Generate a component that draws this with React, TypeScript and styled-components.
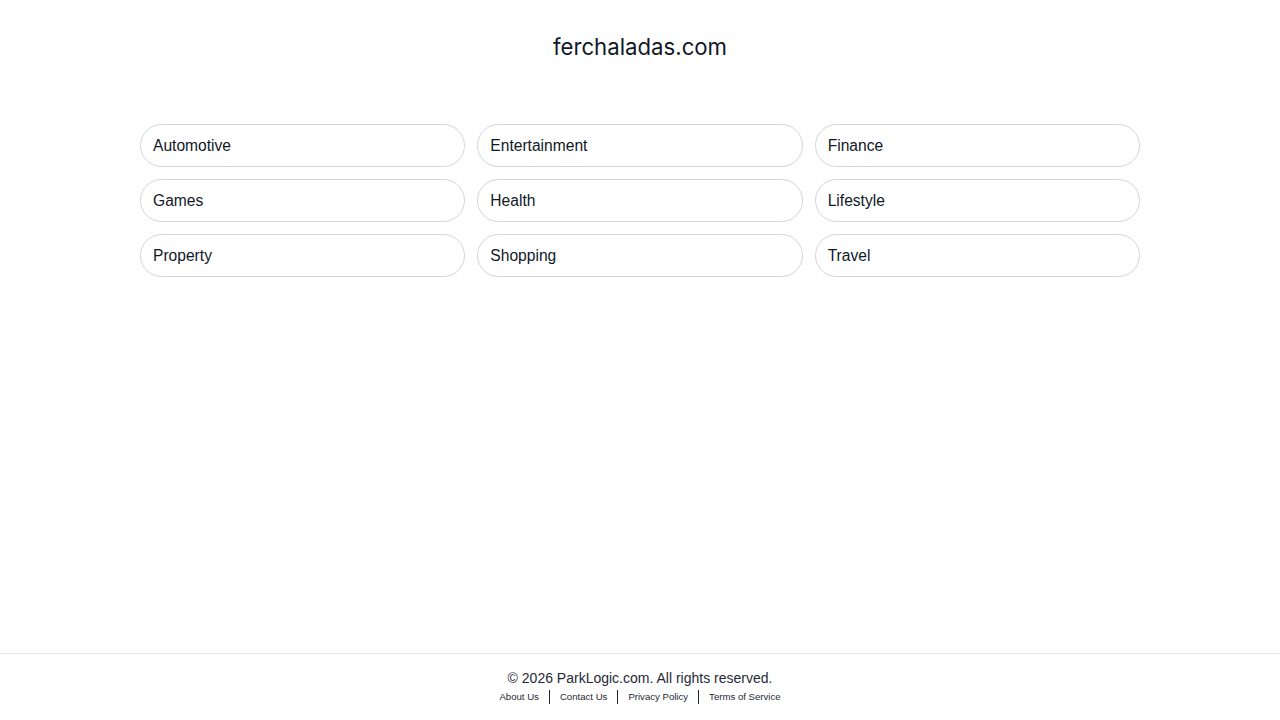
import styled, { createGlobalStyle } from "styled-components";

const categories = [
  "Automotive",
  "Entertainment",
  "Finance",
  "Games",
  "Health",
  "Lifestyle",
  "Property",
  "Shopping",
  "Travel",
];

const links = ["About Us", "Contact Us", "Privacy Policy", "Terms of Service"];

const GlobalStyle = createGlobalStyle`
  html, body {
    margin: 0;
    padding: 0;
    background: #ffffff;
  }
  body {
    font-family: "Liberation Sans", Arial, sans-serif;
    color: #111827;
  }
`;

const Page = styled.div`
  min-height: 100vh;
  display: flex;
  flex-direction: column;
`;

const Main = styled.main`
  flex: 1;
  display: flex;
  flex-direction: column;
  align-items: center;
`;

const Title = styled.h1`
  margin: 32px 0 0;
  font-family: Inter, "Liberation Sans", sans-serif;
  font-size: 22.2px;
  font-weight: 400;
  line-height: 30px;
  color: #111827;
`;

const Grid = styled.div`
  width: 1000px;
  margin-top: 62px;
  display: grid;
  grid-template-columns: repeat(3, 1fr);
  gap: 12px;
`;

const Pill = styled.a`
  display: flex;
  align-items: center;
  height: 43px;
  box-sizing: border-box;
  padding: 0 12px;
  border: 1px solid #d1d5db;
  border-radius: 22px;
  font-size: 15.6px;
  color: #111827;
  text-decoration: none;
`;

const Footer = styled.footer`
  border-top: 1px solid #e5e7eb;
  padding: 15px 0 16px;
  display: flex;
  flex-direction: column;
  align-items: center;
  gap: 3px;
`;

const Copy = styled.div`
  font-size: 14px;
  line-height: 18px;
  color: #1f2937;
`;

const Links = styled.nav`
  display: flex;
  align-items: center;
`;

const FooterLink = styled.a<{ $first?: boolean }>`
  font-size: 9.6px;
  line-height: 14px;
  color: #1f2937;
  text-decoration: none;
  padding: 0 10px;
  border-left: ${(p) => (p.$first ? "none" : "1px solid #1f2937")};
`;

export default function App() {
  return (
    <>
      <GlobalStyle />
      <Page>
        <Main>
          <Title>ferchaladas.com</Title>
          <Grid>
            {categories.map((c) => (
              <Pill key={c} href="#">
                {c}
              </Pill>
            ))}
          </Grid>
        </Main>
        <Footer>
          <Copy>© 2026 ParkLogic.com. All rights reserved.</Copy>
          <Links>
            {links.map((l, i) => (
              <FooterLink key={l} href="#" $first={i === 0}>
                {l}
              </FooterLink>
            ))}
          </Links>
        </Footer>
      </Page>
    </>
  );
}
